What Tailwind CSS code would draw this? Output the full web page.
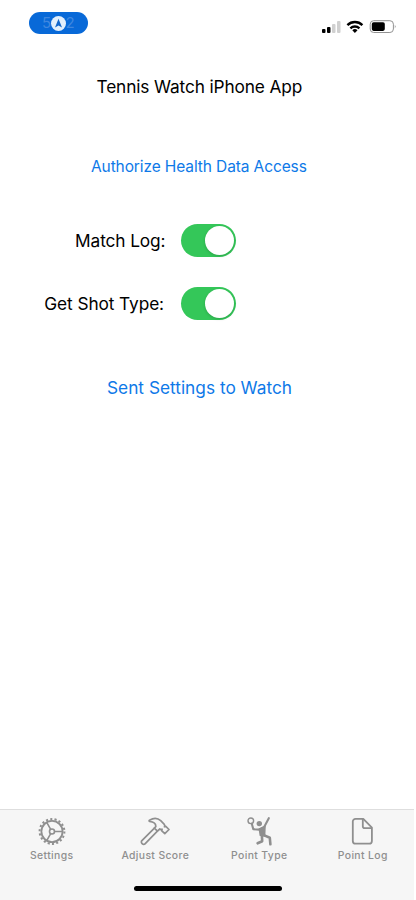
<!DOCTYPE html>
<html lang="en">
<head>
<meta charset="utf-8">
<title>Tennis Watch</title>
<script src="https://cdn.jsdelivr.net/npm/@tailwindcss/browser@4"></script>
</head>
<body class="bg-white">
<div class="flex h-[900px] w-[416px] flex-col overflow-hidden bg-white font-['Inter',sans-serif] text-black">
  <header class="flex h-[46px] items-start justify-between pl-[29px] pr-[18px]">
    <div class="relative mt-[12px] flex h-[22px] w-[59px] items-center justify-center rounded-full bg-[#0869d8] text-[15px] text-[#3f87df]">
      <span class="tracking-[0.2px]">5:02</span>
      <svg class="absolute left-[22px] top-[4px] h-[15px] w-[15px]" viewBox="0 0 15 15"><circle cx="7.5" cy="7.5" r="7.5" fill="#e2effc"/><path d="M7.5 2.8 11 11.4 7.5 9.5 4 11.4Z" fill="#1267cc"/></svg>
    </div>
    <div class="mt-[19px] flex items-center">
      <svg class="h-[15px] w-[80px]" viewBox="318 19 80 15">
        <rect x="322" y="29" width="3.5" height="4" rx="1"/><rect x="327" y="27" width="3.5" height="6" rx="1"/>
        <rect x="332" y="24" width="3.5" height="9" rx="1" fill="#d0d0d0"/><rect x="337" y="21" width="3.5" height="12" rx="1" fill="#d0d0d0"/>
        <g fill="none" stroke="#000" stroke-width="2.4"><path d="M347.4 25.1a10.8 10.8 0 0 1 15 0"/><path d="M350.4 28.3a6.5 6.5 0 0 1 9 0"/></g>
        <path d="M352.3 30.3a3.8 3.8 0 0 1 5.2 0L354.9 33Z"/>
        <rect x="370.2" y="20.7" width="23.2" height="11.8" rx="3.5" fill="none" stroke="#929292"/>
        <rect x="371.8" y="22.3" width="13" height="8.6" rx="1.8"/><path d="M394.8 24.8q1.8 1.8 0 3.8Z" fill="#929292"/>
      </svg>
    </div>
  </header>
  <main class="flex flex-1 flex-col whitespace-nowrap">
    <h1 class="mt-[27px] ml-[96.5px] h-[27px] text-[17.3px] leading-[27px] tracking-[-0.14px]">Tennis Watch iPhone App</h1>
    <button class="mt-[54px] ml-[91px] h-[26px] self-start text-[15.5px] leading-[26px] tracking-[-0.11px] text-[#0e79e8]">Authorize Health Data Access</button>
    <div class="mt-[43px] flex h-[34px] items-center">
      <span class="w-[165.5px] pt-[2px] text-right text-[17.3px] tracking-[-0.1px]">Match Log:</span>
      <span class="ml-[15.5px] flex h-[33px] w-[55px] items-center justify-end rounded-full bg-[#34c759] pr-[2px]"><span class="h-[29px] w-[29px] rounded-full bg-white shadow-[0_1px_3px_rgba(0,0,0,0.18)]"></span></span>
    </div>
    <div class="mt-[29px] flex h-[34px] items-center">
      <span class="w-[164px] pt-[2px] text-right text-[17.3px] tracking-[-0.1px]">Get Shot Type:</span>
      <span class="ml-[17px] flex h-[33px] w-[55px] items-center justify-end rounded-full bg-[#34c759] pr-[2px]"><span class="h-[29px] w-[29px] rounded-full bg-white shadow-[0_1px_3px_rgba(0,0,0,0.18)]"></span></span>
    </div>
    <button class="mt-[54px] ml-[107px] h-[28px] self-start text-[17.3px] leading-[28px] text-[#0e79e8]">Sent Settings to Watch</button>
  </main>
  <footer class="flex h-[91px] w-[414px] flex-col border-t border-[#dedede] bg-[#f6f6f6] text-[#8f8f8f]">
    <nav class="grid h-[76px] grid-cols-4 text-[10.4px] font-medium leading-[16px] tracking-[0.36px]">
      <a class="flex flex-col items-center pt-[6px]">
        <svg class="h-[32px] w-[32px]" viewBox="0 0 32 32" fill="none" stroke="currentColor"><circle cx="16" cy="15.5" r="10.6" stroke-width="1.8"/><circle cx="16" cy="15.5" r="12.4" stroke-width="2" stroke-dasharray="2.1 2.228"/><circle cx="16" cy="15.5" r="2.5" stroke-width="1.6"/><path d="M18.5 15.5H26M14.7 13.3 10.7 6.4M14.7 17.7l-4 6.9" stroke-width="1.6"/></svg>
        <span>Settings</span></a>
      <a class="flex flex-col items-center pt-[6px]">
        <svg class="h-[32px] w-[32px]" viewBox="0 0 32 32" fill="none" stroke="currentColor" stroke-width="1.7" stroke-linejoin="round" stroke-linecap="round"><path d="M15.4 12.2 2.9 24.7a1.8 1.8 0 0 0 0 2.6l.5.5a1.8 1.8 0 0 0 2.6 0L18.4 15.2"/><path d="M10.5 4.2Q17 .4 21.7 4.7L25.3 8.4Q25.9 9.2 25.5 10.8L26.8 10.4 30 13.5 25.8 17.7 22.6 14.6 23.1 13.2Q21.8 13.7 20.8 13L18.4 15.2 15.4 12.2 16.8 10.7Q17.2 6.2 10.7 5.5 9.6 5 10.5 4.2Z"/></svg>
        <span>Adjust Score</span></a>
      <a class="flex flex-col items-center pt-[6px]">
        <svg class="h-[32px] w-[32px]" viewBox="-1 0 32 32" fill="none" stroke="currentColor" stroke-linecap="round" stroke-linejoin="round"><circle cx="6.8" cy="4.8" r="2.8" stroke-width="1.4"/><circle cx="15.3" cy="7.6" r="2.7" fill="currentColor" stroke="none"/><path d="M7.8 7.7 9.3 13.2 15.5 13.6 20.3 10.8 24.8 2.2" stroke-width="2.1"/><path d="M15.3 13 21 10.5 20.6 20 16.3 19.3Z" fill="currentColor" stroke-width="1.5"/><path d="M17.8 18.3 18.2 25.2 13.6 27.3M19.8 19.1 25.8 21.8 26.4 28.3" stroke-width="2.6"/></svg>
        <span class="ml-[1px]">Point Type</span></a>
      <a class="flex flex-col items-center pt-[6px]">
        <svg class="h-[32px] w-[32px]" viewBox="-0.5 0 32 32" fill="none" stroke="currentColor" stroke-width="1.8" stroke-linejoin="round"><path d="M9.1 2.8h7.7l8.6 8.8v13.3a2.8 2.8 0 0 1-2.8 2.8H9.1a2.8 2.8 0 0 1-2.8-2.8V5.6a2.8 2.8 0 0 1 2.8-2.8Z"/><path d="M16.3 2.8v7.4q0 1.9 1.9 1.9h7.2"/></svg>
        <span class="ml-[1px]">Point Log</span></a>
    </nav>
    <div class="ml-[134px] h-[5px] w-[148px] rounded-full bg-black"></div>
  </footer>
</div>
</body>
</html>
